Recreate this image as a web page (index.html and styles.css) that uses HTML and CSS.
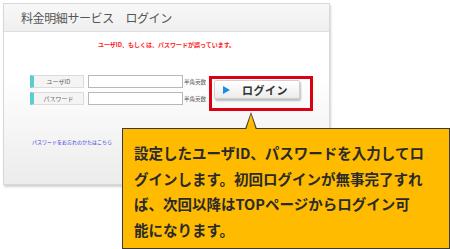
FILE: index.html
```html
<!DOCTYPE html>
<html lang="ja">
<head>
    <meta charset="UTF-8">
    <title>料金明細サービス ログイン</title>
    <link rel="stylesheet" href="styles.css">
</head>
<body>
    <div class="screen">
        <div class="panel">
            <div class="panel-head">
                <h1>料金明細サービス　ログイン</h1>
            </div>
            <div class="panel-body">
                <p class="error">ユーザID、もしくは、パスワードが誤っています。</p>
                <div class="login">
                    <div class="fields">
                        <div class="field-row">
                            <span class="field-label">ユーザID</span>
                            <input class="field-input" type="text">
                            <span class="note">半角英数</span>
                        </div>
                        <div class="field-row">
                            <span class="field-label">パスワード</span>
                            <input class="field-input" type="password">
                            <span class="note">半角英数</span>
                        </div>
                    </div>
                    <div class="login-frame">
                        <button class="login-btn" type="button"><span class="tri"></span>ログイン</button>
                    </div>
                </div>
                <a class="forgot" href="#">パスワードをお忘れのかたはこちら</a>
            </div>
        </div>

        <!-- 吹き出し -->
        <div class="callout">
            <p>設定したユーザID、パスワードを入力してロ<br>グインします。初回ログインが無事完了すれ<br>ば、次回以降はTOPページからログイン可<br>能になります。</p>
        </div>
    </div>
</body>
</html>
```

FILE: styles.css
```css
body {
    margin: 0;
    background: #fff;
    font-family: "Noto Sans CJK JP", "Noto Sans", sans-serif;
    color: #333;
}

.screen {
    position: relative;
    width: 450px;
    height: 249px;
    overflow: hidden;
}

.panel {
    margin: 3px 0 0 3px;
    width: 325px;
    height: 180px;
    border: 1px solid #d8d8d8;
    background: linear-gradient(#ffffff 40%, #ececec);
    box-shadow: 1px 2px 2px rgba(0, 0, 0, 0.18);
}

.panel-head {
    height: 27px;
    background: linear-gradient(#f8f8f8, #efefef);
    border-bottom: 1px solid #dedede;
    display: flex;
    align-items: center;
    padding-left: 17px;
}

.panel-head h1 {
    margin: 0;
    font-size: 12px;
    font-weight: normal;
    color: #555;
    letter-spacing: -0.4px;
}

.panel-body {
    padding: 9px 0 0 26px;
}

.error {
    margin: 0 0 0 -26px;
    text-align: center;
    font-size: 6px;
    font-weight: bold;
    color: #ff1a1a;
    line-height: 8px;
}

.login {
    display: flex;
    align-items: center;
    margin-top: 27px;
}

.fields {
    display: flex;
    flex-direction: column;
    gap: 4px;
    margin-top: -7px;
}

.field-row {
    display: flex;
    align-items: center;
    height: 13px;
}

.field-label {
    box-sizing: border-box;
    width: 54px;
    height: 13px;
    border: 1px solid #dcdcdc;
    border-left: 4px solid #5ccccc;
    background: #f4f4f4;
    font-size: 6px;
    line-height: 11px;
    text-align: center;
    color: #666;
}

.field-input {
    box-sizing: border-box;
    width: 95px;
    height: 13px;
    margin: 0 0 0 4px;
    padding: 0;
    border: 1px solid #b8b8b8;
    background: #fff;
}

.note {
    margin-left: 1px;
    font-size: 5.5px;
    color: #555;
}

.login-frame {
    margin-left: 3px;
    width: 92px;
    height: 24px;
    border: 3px solid #dd0011;
    padding: 1px 4px 4px 2px;
    box-sizing: content-box;
    display: flex;
}

.login-btn {
    width: 86px;
    height: 19px;
    padding: 0 0 0 8px;
    border: 1px solid #cfcfcf;
    border-radius: 2px;
    background: linear-gradient(#ffffff, #ececec);
    box-shadow: 1px 2px 2px rgba(0, 0, 0, 0.25);
    display: flex;
    align-items: center;
    font-family: "Noto Sans CJK JP", sans-serif;
    font-size: 11px;
    font-weight: bold;
    color: #333;
    letter-spacing: 0.5px;
}

.tri {
    width: 0;
    height: 0;
    border-top: 4px solid transparent;
    border-bottom: 4px solid transparent;
    border-left: 7px solid #1a8fe3;
    margin-right: 12px;
}

.forgot {
    display: block;
    margin-top: 27px;
    margin-left: 2px;
    font-size: 5px;
    color: #3a3adc;
    text-decoration: none;
}

.callout {
    position: absolute;
    left: 122px;
    top: 128px;
    width: 326px;
    height: 119px;
    background: #ffbb00;
    border: 1px solid #3a3a3a;
}

.callout::before,
.callout::after {
    content: "";
    position: absolute;
    width: 0;
    height: 0;
    left: 122px;
    border-left: 6px solid transparent;
    border-right: 6px solid transparent;
}

.callout::before {
    top: -17px;
    border-bottom: 17px solid #3a3a3a;
}

.callout::after {
    top: -15px;
    left: 123px;
    border-left-width: 5px;
    border-right-width: 5px;
    border-bottom: 16px solid #ffbb00;
}

.callout p {
    margin: 0;
    padding: 11px 0 0 11px;
    font-size: 14.5px;
    font-weight: bold;
    line-height: 25.7px;
    color: #2a2a2a;
}
```
